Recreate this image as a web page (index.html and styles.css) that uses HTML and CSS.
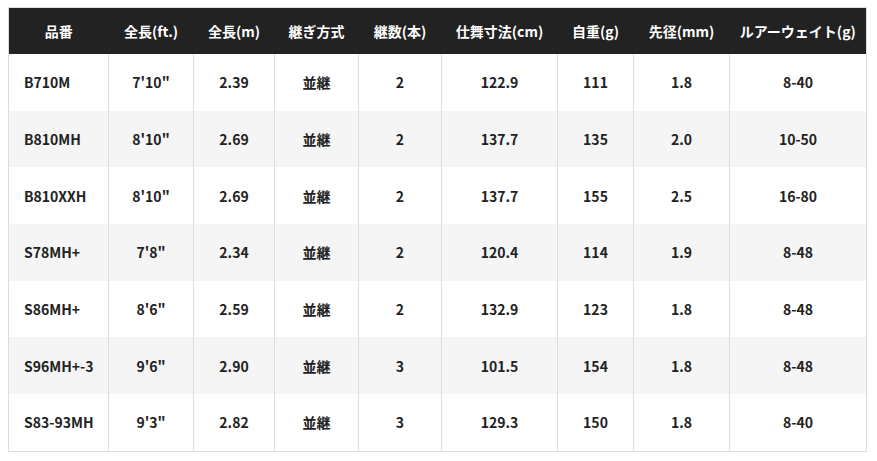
FILE: index.html
```html
<!DOCTYPE html>
<html lang="ja">
<head>
<meta charset="utf-8">
<link rel="stylesheet" href="styles.css">
</head>
<body>
<table class="spec">
  <colgroup>
    <col class="c1"><col class="c2"><col class="c3"><col class="c4"><col class="c5"><col class="c6"><col class="c7"><col class="c8"><col class="c9">
  </colgroup>
  <thead>
    <tr><th>品番</th><th>全長(ft.)</th><th>全長(m)</th><th>継ぎ方式</th><th>継数(本)</th><th>仕舞寸法(cm)</th><th>自重(g)</th><th>先径(mm)</th><th>ルアーウェイト(g)</th></tr>
  </thead>
  <tbody>
    <tr><td>B710M</td><td>7'10"</td><td>2.39</td><td>並継</td><td>2</td><td>122.9</td><td>111</td><td>1.8</td><td>8-40</td></tr>
    <tr><td>B810MH</td><td>8'10"</td><td>2.69</td><td>並継</td><td>2</td><td>137.7</td><td>135</td><td>2.0</td><td>10-50</td></tr>
    <tr><td>B810XXH</td><td>8'10"</td><td>2.69</td><td>並継</td><td>2</td><td>137.7</td><td>155</td><td>2.5</td><td>16-80</td></tr>
    <tr><td>S78MH+</td><td>7'8"</td><td>2.34</td><td>並継</td><td>2</td><td>120.4</td><td>114</td><td>1.9</td><td>8-48</td></tr>
    <tr><td>S86MH+</td><td>8'6"</td><td>2.59</td><td>並継</td><td>2</td><td>132.9</td><td>123</td><td>1.8</td><td>8-48</td></tr>
    <tr><td>S96MH+-3</td><td>9'6"</td><td>2.90</td><td>並継</td><td>3</td><td>101.5</td><td>154</td><td>1.8</td><td>8-48</td></tr>
    <tr><td>S83-93MH</td><td>9'3"</td><td>2.82</td><td>並継</td><td>3</td><td>129.3</td><td>150</td><td>1.8</td><td>8-40</td></tr>
  </tbody>
</table>
</body>
</html>
```

FILE: styles.css
```css
html, body {
  margin: 0;
  padding: 0;
  background: #ffffff;
}
body {
  padding: 7px 0 0 8px;
  font-family: "Noto Sans CJK JP", "Noto Sans", sans-serif;
  font-weight: 700;
  font-size: 14px;
  color: #222222;
}
.spec {
  border-collapse: collapse;
  table-layout: fixed;
  width: 858px;
  border: 1px solid #dddddd;
}
.c1 { width: 100px; }
.c2 { width: 85px; }
.c3 { width: 81px; }
.c4 { width: 84px; }
.c5 { width: 83px; }
.c6 { width: 116px; }
.c7 { width: 76px; }
.c8 { width: 96px; }
.c9 { width: 137px; }
.spec th {
  background: #222222;
  color: #ffffff;
  height: 46px;
  padding: 0;
  text-align: center;
  font-weight: 700;
  border: none;
}
.spec td {
  height: 56.7px;
  padding: 0;
  text-align: center;
  border-left: 1px solid #dddddd;
}
.spec td:first-child {
  text-align: left;
  padding-left: 15px;
  border-left: none;
}
.spec tbody tr:nth-child(even) td {
  background: #f5f5f5;
}
```
